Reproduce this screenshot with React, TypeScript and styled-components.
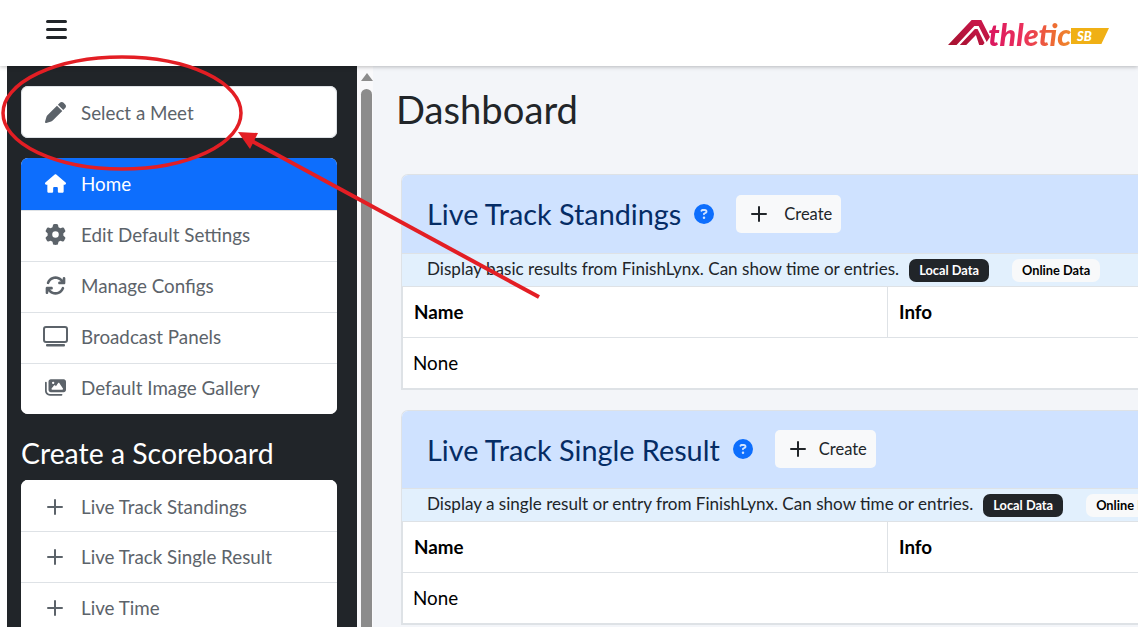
import React from "react";
import styled, { createGlobalStyle } from "styled-components";
import { FaPen, FaHouse, FaGear, FaArrowsRotate, FaImages, FaCircleQuestion } from "react-icons/fa6";

const Global = createGlobalStyle`
  html, body { margin: 0; padding: 0; background: #fff; }
  body { font-family: "Lato", "Noto Sans", sans-serif; color: #212529; overflow: hidden; }
  * { box-sizing: border-box; }
`;

const Page = styled.div`
  position: relative;
  width: 1138px;
  height: 627px;
  overflow: hidden;
  display: flex;
  flex-direction: column;
  background: #fff;
`;

const Header = styled.header`
  height: 66px;
  flex: none;
  display: flex;
  align-items: center;
  justify-content: space-between;
  padding: 0 29px 8px 46px;
  background: #fff;
  box-shadow: 0 1px 4px rgba(0, 0, 0, 0.25);
  position: relative;
  z-index: 2;
`;

const Burger = styled.div`
  width: 21px;
  display: flex;
  flex-direction: column;
  gap: 5px;
  span { height: 3px; border-radius: 2px; background: #212529; }
`;

const Logo = styled.div`
  display: flex;
  align-items: flex-end;
  margin-top: 8px;
`;

const LogoWord = styled.span`
  font: italic 900 30.5px/26px "Lato", sans-serif;
  letter-spacing: 0;
  margin: 0 0 -1px -3px;
  padding-right: 2px;
  background: linear-gradient(90deg, #d9155f 0%, #ea2f5c 40%, #ee7030 80%, #f08c2c 100%);
  -webkit-background-clip: text;
  background-clip: text;
  color: transparent;
`;

const LogoBadge = styled.span`
  width: 38px;
  height: 16px;
  margin: 0 0 2px -2px;
  padding-left: 6px;
  background: #f0b015;
  clip-path: polygon(0 0, 100% 0, 80% 100%, 0 100%);
  color: #fff;
  font: italic 900 13px/16px "Lato", sans-serif;
`;

const Body = styled.div`
  flex: 1;
  min-height: 0;
  display: flex;
  padding-left: 7px;
`;

const Sidebar = styled.aside`
  width: 350px;
  flex: none;
  background: #212529;
  padding: 20px 20px 0 14px;
  overflow: hidden;
`;

const SideList = styled.div`
  background: #fff;
  border-radius: 7px;
  overflow: hidden;
  margin-bottom: 20px;
`;

const SideRow = styled.div<{ $active?: boolean }>`
  height: ${(p) => (p.$active ? 52 : 51)}px;
  display: flex;
  align-items: center;
  font-size: 18.8px;
  padding-bottom: ${(p) => (p.$active ? 1 : 3)}px;
  color: ${(p) => (p.$active ? "#fff" : "#5c636a")};
  background: ${(p) => (p.$active ? "#0d6efd" : "#fff")};
  font-weight: 400;
  & + & { border-top: 1px solid #dee2e6; }
`;

const ScoreRow = styled(SideRow)`
  padding-bottom: 1px;
  border-top: 1px solid #dee2e6;
  &:first-child { border-top: 1px solid #fff; padding: 1px 0 0; }
`;

const SelectRow = styled(SideRow)`
  height: 52px;
  padding-bottom: 0;
  border-radius: 7px;
  box-shadow: inset 0 0 0 1px #dee2e6;
  margin-bottom: 20px;
`;

const IconSlot = styled.span`
  width: 60px;
  flex: none;
  display: flex;
  justify-content: center;
  font-size: 21px;
  line-height: 0;
  padding-left: 8px;
`;

const SideHeading = styled.h2`
  margin: 0 0 8px;
  font-size: 28.4px;
  line-height: 38px;
  font-weight: 400;
  color: #fff;
  height: 38px;
`;

const Scrollbar = styled.div`
  width: 16px;
  flex: none;
  background: #f9f9fb;
  padding: 7px 0 0 3px;
  display: flex;
  flex-direction: column;
  align-items: center;
  gap: 8px;
`;

const ScrollUp = styled.div`
  width: 0;
  height: 0;
  border-left: 6.5px solid transparent;
  border-right: 6.5px solid transparent;
  border-bottom: 8px solid #8c8c8c;
`;

const ScrollThumb = styled.div`
  width: 11px;
  flex: 1;
  background: #8c8c8c;
  border-radius: 6px 6px 0 0;
`;

const Main = styled.main`
  flex: 1;
  min-width: 0;
  background: #f3f5f9;
  padding: 15px 0 0 24px;
  overflow: hidden;
`;

const Title = styled.h1`
  margin: 0 0 37px -1px;
  font-size: 38.2px;
  line-height: 56px;
  font-weight: 400;
  height: 56px;
`;

const Card = styled.section`
  width: 900px;
  margin: 0 0 20px 4px;
  border-top: 1px solid #dee2e6;
  border-left: 1px solid #dee2e6;
  border-bottom: 2px solid #dee2e6;
  border-radius: 7px 0 0 0;
  overflow: hidden;
  background: #fff;
`;

const CardHead = styled.div<{ $h: number }>`
  height: ${(p) => p.$h}px;
  background: #cfe2ff;
  display: flex;
  align-items: center;
  padding: 0 0 0 25px;
`;

const CardTitle = styled.h3`
  margin: 0;
  font-size: 28.8px;
  font-weight: 400;
  color: #052c65;
`;

const Help = styled.span`
  color: #0d6efd;
  font-size: 20px;
  line-height: 0;
  margin-left: 13px;
  margin-top: -1px;
`;

const CreateButton = styled.button<{ $w: number; $gap: number }>`
  width: ${(p) => p.$w}px;
  height: 38px;
  margin: -1px 0 0 22px;
  padding: 0 0 0 15px;
  border: 0;
  border-radius: 5px;
  background: #f8f9fa;
  display: flex;
  align-items: center;
  gap: ${(p) => p.$gap}px;
  font: 400 16.5px "Lato", sans-serif;
  color: #212529;
`;

const CardSub = styled.div`
  height: 34px;
  background: #e2f0fd;
  border-top: 1px solid #dee2e6;
  border-bottom: 1px solid #dee2e6;
  display: flex;
  align-items: center;
  padding: 0 0 3px 25px;
  font-size: 17.08px;
`;

const Pill = styled.span<{ $dark?: boolean; $gap: number }>`
  margin-left: ${(p) => p.$gap}px;
  margin-top: 3px;
  padding: 0 10px;
  height: 23px;
  display: inline-flex;
  align-items: center;
  border-radius: 7px;
  font-size: 12.8px;
  font-weight: 700;
  white-space: nowrap;
  color: ${(p) => (p.$dark ? "#fff" : "#000")};
  background: ${(p) => (p.$dark ? "#212529" : "#f8f9fa")};
`;

const Row = styled.div`
  height: 51px;
  display: grid;
  grid-template-columns: 484px 1fr;
  border-left: 1px solid #dee2e6;
  border-bottom: 1px solid #dee2e6;
  font-size: 18.8px;
`;

const LastRow = styled.div`
  height: 50px;
  display: flex;
  border-left: 1px solid #dee2e6;
  font-size: 18.8px;
`;

const Cell = styled.div<{ $head?: boolean }>`
  display: flex;
  align-items: center;
  padding: 0 0 2px ${(p) => (p.$head ? 11 : 10)}px;
  font-weight: ${(p) => (p.$head ? 700 : 400)};
  color: #000;
  & + & { border-left: 1px solid #dee2e6; }
`;

const Annotation = styled.svg`
  position: absolute;
  inset: 0;
  z-index: 5;
  pointer-events: none;
`;

const Monitor = () => (
  <svg width="25" height="21" viewBox="0 0 25 21" fill="none">
    <rect x="1" y="1" width="23" height="15" rx="2" stroke="currentColor" strokeWidth="2" />
    <rect x="3" y="18" width="19" height="2.5" rx="1" fill="currentColor" />
  </svg>
);

const Plus = () => (
  <svg width="16" height="16" viewBox="0 0 16 16" fill="none" stroke="currentColor" strokeWidth="2" strokeLinecap="round">
    <path d="M8 1v14M1 8h14" />
  </svg>
);

const LogoMark = () => (
  <svg width="43" height="26" viewBox="0 0 40 26" preserveAspectRatio="none">
    <defs>
      <linearGradient id="mark" x1="0" x2="1" y1="1" y2="0">
        <stop offset="0" stopColor="#a5122f" />
        <stop offset="1" stopColor="#d0184f" />
      </linearGradient>
    </defs>
    <path
      d="M0 25 L22 0 H31 L39 17 L36 22 L28.5 6 H24.5 L8 25 Z M11 25 L25 9 H27.5 L34 23 L32.5 25 H29 L26 15 L17 25 Z"
      fill="url(#mark)"
    />
  </svg>
);

const navItems = [
  { label: "Edit Default Settings", icon: <FaGear /> },
  { label: "Manage Configs", icon: <FaArrowsRotate /> },
  { label: "Broadcast Panels", icon: <Monitor /> },
  { label: "Default Image Gallery", icon: <FaImages /> },
];

const scoreboards = ["Live Track Standings", "Live Track Single Result", "Live Time"];

const DataCard = ({ title, text, btn, gap, head }: { title: string; text: string; btn: number; gap: number; head: number }) => (
  <Card>
    <CardHead $h={head}>
      <CardTitle>{title}</CardTitle>
      <Help><FaCircleQuestion /></Help>
      <CreateButton $w={btn} $gap={gap}><Plus />Create</CreateButton>
    </CardHead>
    <CardSub>
      {text}
      <Pill $dark $gap={10}>Local Data</Pill>
      <Pill $gap={23}>Online Data</Pill>
    </CardSub>
    <Row><Cell $head>Name</Cell><Cell $head>Info</Cell></Row>
    <LastRow><Cell>None</Cell></LastRow>
  </Card>
);

export default function App() {
  return (
    <Page>
      <Global />
      <Header>
        <Burger><span /><span /><span /></Burger>
        <Logo>
          <LogoMark />
          <LogoWord>thletic</LogoWord>
          <LogoBadge>SB</LogoBadge>
        </Logo>
      </Header>
      <Body>
        <Sidebar>
          <SelectRow><IconSlot><FaPen /></IconSlot>Select a Meet</SelectRow>
          <SideList>
            <SideRow $active><IconSlot><FaHouse /></IconSlot>Home</SideRow>
            {navItems.map((n) => (
              <SideRow key={n.label}><IconSlot>{n.icon}</IconSlot>{n.label}</SideRow>
            ))}
          </SideList>
          <SideHeading>Create a Scoreboard</SideHeading>
          <SideList>
            {scoreboards.map((s) => (
              <ScoreRow key={s}><IconSlot><Plus /></IconSlot>{s}</ScoreRow>
            ))}
          </SideList>
        </Sidebar>
        <Scrollbar><ScrollUp /><ScrollThumb /></Scrollbar>
        <Main>
          <Title>Dashboard</Title>
          <DataCard
            title="Live Track Standings"
            text="Display basic results from FinishLynx. Can show time or entries."
            btn={105}
            gap={17}
            head={78}
          />
          <DataCard
            title="Live Track Single Result"
            text="Display a single result or entry from FinishLynx. Can show time or entries."
            btn={101}
            gap={13}
            head={77}
          />
        </Main>
      </Body>
      <Annotation width="1138" height="627" viewBox="0 0 1138 627">
        <ellipse cx="122" cy="113" rx="119" ry="56" fill="none" stroke="#e31e24" strokeWidth="3.5" />
        <line x1="539" y1="297" x2="250" y2="140" stroke="#e31e24" strokeWidth="4" />
        <polygon points="238,132 258,133 250,149" fill="#e31e24" />
      </Annotation>
    </Page>
  );
}
